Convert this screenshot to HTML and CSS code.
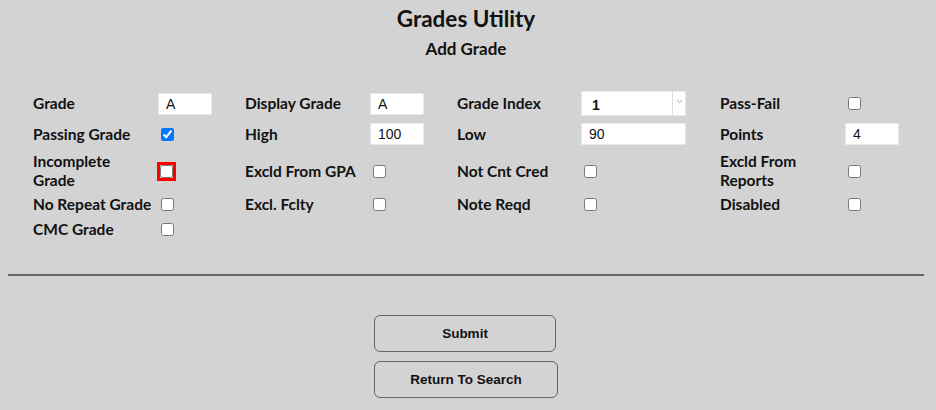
FILE: index.html
```html
<!DOCTYPE html>
<html>
<head>
<meta charset="utf-8">
<link rel="stylesheet" href="styles.css">
</head>
<body>
<div class="page">
  <h1 class="title">Grades Utility</h1>
  <h2 class="subtitle">Add Grade</h2>
  <form class="grid">
    <label class="lbl">Grade</label>
    <div class="cell"><input class="txt short" type="text" value="A"></div>
    <label class="lbl">Display Grade</label>
    <div class="cell"><input class="txt short" type="text" value="A"></div>
    <label class="lbl">Grade Index</label>
    <div class="cell"><div class="select"><span class="sel-val">1</span><span class="sel-btn"><svg width="7" height="5" viewBox="0 0 7 5"><path d="M1 1.2 L3.5 3.6 L6 1.2" fill="none" stroke="#a0a0a0" stroke-width="1"/></svg></span></div></div>
    <label class="lbl">Pass-Fail</label>
    <div class="cell"><input class="chk" type="checkbox"></div>

    <label class="lbl">Passing Grade</label>
    <div class="cell"><input class="chk" type="checkbox" checked></div>
    <label class="lbl">High</label>
    <div class="cell"><input class="txt short" type="text" value="100"></div>
    <label class="lbl">Low</label>
    <div class="cell"><input class="txt long" type="text" value="90"></div>
    <label class="lbl">Points</label>
    <div class="cell"><input class="txt short" type="text" value="4"></div>

    <label class="lbl">Incomplete<br>Grade</label>
    <div class="cell"><input class="chk invalid" type="checkbox"></div>
    <label class="lbl">Excld From GPA</label>
    <div class="cell"><input class="chk" type="checkbox"></div>
    <label class="lbl">Not Cnt Cred</label>
    <div class="cell"><input class="chk" type="checkbox"></div>
    <label class="lbl">Excld From<br>Reports</label>
    <div class="cell"><input class="chk" type="checkbox"></div>

    <label class="lbl">No Repeat Grade</label>
    <div class="cell"><input class="chk" type="checkbox"></div>
    <label class="lbl">Excl. Fclty</label>
    <div class="cell"><input class="chk" type="checkbox"></div>
    <label class="lbl">Note Reqd</label>
    <div class="cell"><input class="chk" type="checkbox"></div>
    <label class="lbl">Disabled</label>
    <div class="cell"><input class="chk" type="checkbox"></div>

    <label class="lbl">CMC Grade</label>
    <div class="cell"><input class="chk" type="checkbox"></div>
  </form>
  <hr class="rule">
  <div class="actions">
    <button class="btn" type="button">Submit</button>
    <button class="btn wide" type="button">Return To Search</button>
  </div>
</div>
</body>
</html>
```
FILE: styles.css
```css
html, body {
  background: #d3d3d3;
}
body {
  margin: 8px;
  font-family: "Lato", "Noto Sans", sans-serif;
  color: #111;
}
.page {
  width: 916px;
}
.title {
  margin: 0;
  text-align: center;
  font-size: 22.5px;
  line-height: 22px;
  font-weight: 700;
}
.subtitle {
  margin: 9px 0 0 0;
  text-align: center;
  font-size: 17px;
  line-height: 20px;
  font-weight: 700;
}
.grid {
  display: grid;
  grid-template-columns: 125px 87px 125px 87px 124px 139px 125px 1fr;
  grid-template-rows: 29px 32px 42px 24px 26px;
  align-items: center;
  margin: 30px 0 0 25px;
}
.lbl {
  font-size: 15.5px;
  line-height: 19px;
  font-weight: 700;
  white-space: nowrap;
}
.cell {
  display: flex;
  align-items: center;
}
.txt {
  box-sizing: border-box;
  height: 22px;
  border: 1px solid #e8e8e8;
  background: #fff;
  font-family: "Liberation Sans", Arial, sans-serif;
  font-size: 14px;
  color: #111;
  padding: 0 0 0 7px;
  margin: 0;
  outline: none;
}
.short { width: 54px; }
.long { width: 105px; }
.select {
  box-sizing: border-box;
  width: 105px;
  height: 25px;
  background: #fff;
  border: 1px solid #e8e8e8;
  display: flex;
  align-items: center;
}
.sel-val {
  flex: 1;
  padding-left: 10px;
  padding-top: 3px;
  font-family: "Liberation Sans", Arial, sans-serif;
  font-size: 14px;
  font-weight: 700;
}
.sel-btn {
  width: 13px;
  height: 100%;
  border-left: 1px solid #ddd;
  display: flex;
  align-items: center;
  justify-content: center;
  padding-bottom: 4px;
  box-sizing: border-box;
}
.chk {
  width: 13px;
  height: 13px;
  margin: 3px;
}
.invalid {
  margin-left: 2px;
  outline: 3px solid #f00;
  outline-offset: 0;
}
.rule {
  border: none;
  height: 2px;
  background: #666;
  margin: 32px 0 0 0;
}
.actions {
  display: flex;
  flex-direction: column;
  align-items: flex-start;
  gap: 9px;
  padding: 39px 0 0 366px;
}
.btn {
  box-sizing: border-box;
  width: 182px;
  height: 37px;
  border: 1px solid #666;
  border-radius: 6px;
  background: #d3d3d3;
  font-family: "Liberation Sans", Arial, sans-serif;
  font-weight: 700;
  font-size: 13.5px;
  color: #111;
}
.wide { width: 184px; }
```
